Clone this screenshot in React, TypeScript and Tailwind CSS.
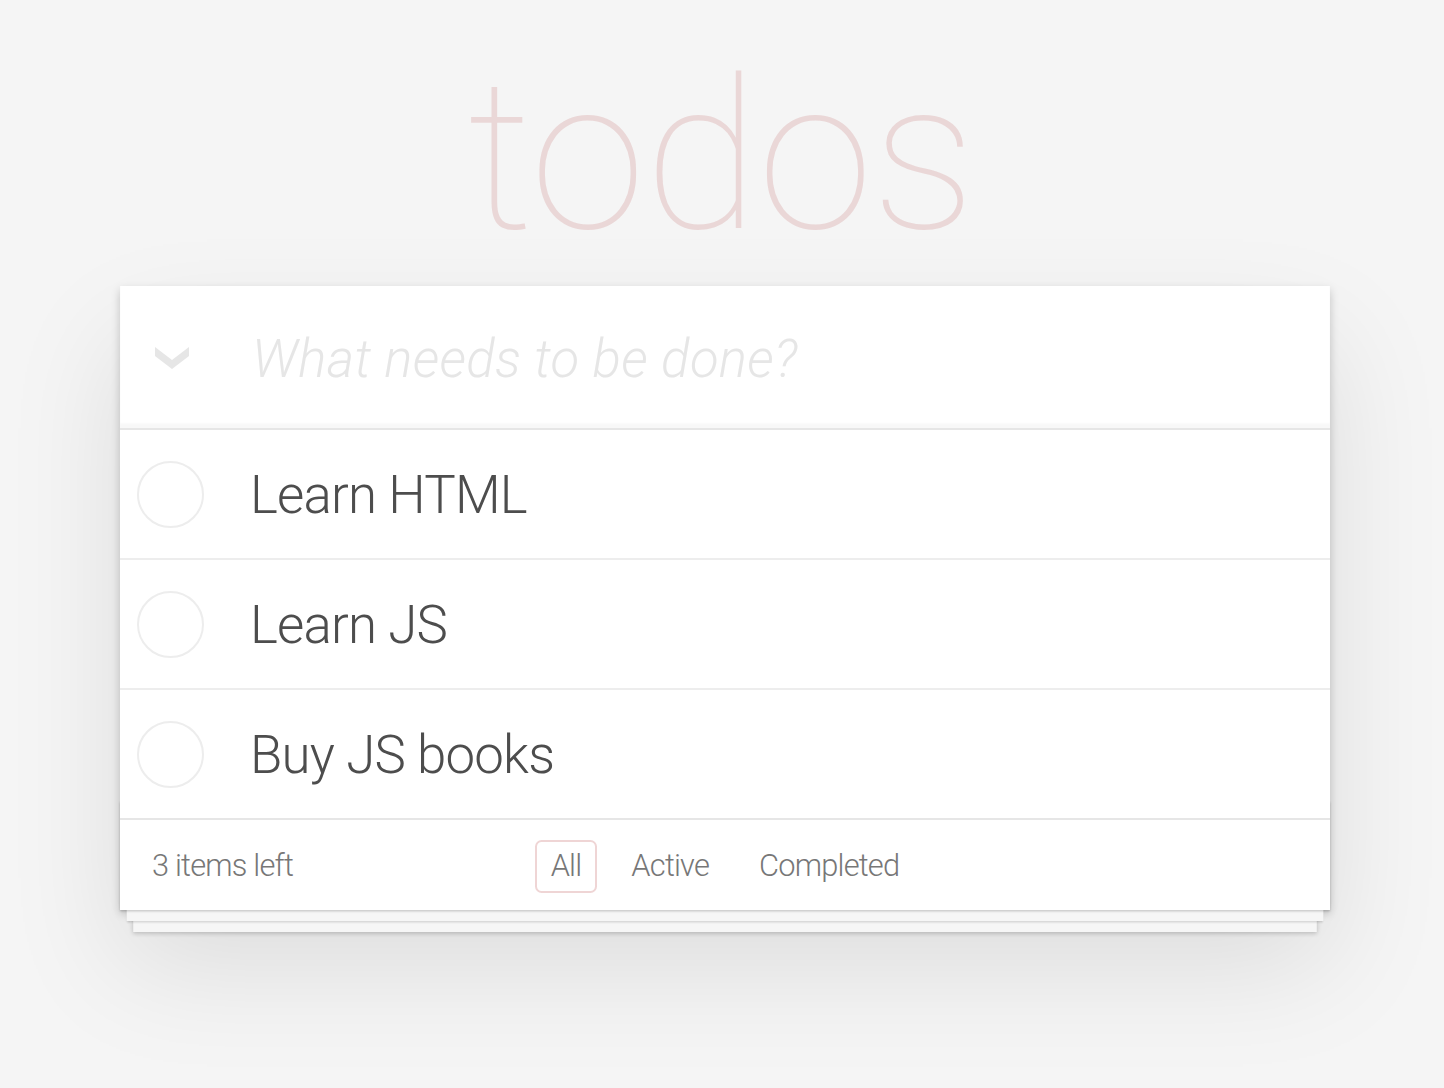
import React from "react";

const font = { fontFamily: "Roboto, 'Liberation Sans', Arial, sans-serif" };

const todos = ["Learn HTML", "Learn JS", "Buy JS books"];

export default function App() {
  return (
    <div
      className="min-h-[1088px] w-full bg-[#f5f5f5] text-[#4d4d4d] font-light"
      style={font}
    >
      <div className="ml-[120px] w-[1210px] pt-[52px]">
        <h1 className="h-[209px] pr-[8px] text-center text-[209px] leading-[209px] font-thin tracking-[-1px] text-[rgba(175,47,47,0.15)]">
          todos
        </h1>
        <div className="mt-[25px] relative bg-white shadow-[0_4.4px_8.8px_0_rgba(0,0,0,0.2),0_55px_110px_0_rgba(0,0,0,0.1)]">
          <header className="flex h-[142px] items-center shadow-[inset_0_-4.4px_2.2px_rgba(0,0,0,0.03)]">
            <div className="flex w-[132px] shrink-0 pl-[35px] pt-[2px]">
              <svg width="34" height="22" viewBox="0 0 34 22">
                <polygon points="0,0 17,13 34,0 34,9 17,22 0,9" fill="#e6e6e6" />
              </svg>
            </div>
            <div className="pt-[4px] text-[52.8px] italic font-light tracking-[0.3px] text-[#e6e6e6] leading-none">
              What needs to be done?
            </div>
          </header>
          <ul className="border-t-2 border-[#e6e6e6]">
            {todos.map((t, i) => (
              <li
                key={t}
                className={
                  i < todos.length - 1
                    ? "flex h-[130px] items-center border-b-2 border-[#ededed]"
                    : "flex h-[128px] items-center"
                }
              >
                <div className="flex w-[132px] shrink-0 pl-[17px]">
                  <div className="h-[67px] w-[67px] rounded-full border-2 border-[#ededed]" />
                </div>
                <span className="-ml-[2px] pt-[2px] text-[52.8px] leading-none font-light tracking-[-0.8px] text-[#4d4d4d]">
                  {t}
                </span>
              </li>
            ))}
          </ul>
          <footer className="relative grid h-[92px] grid-cols-[1fr_auto_1fr] items-center border-t-2 border-[#e6e6e6] px-[33px] text-[30.8px] font-light tracking-[-0.8px] text-[#777]">
            <div className="pointer-events-none absolute bottom-0 left-0 right-0 h-[110px] shadow-[0_2.2px_2.2px_rgba(0,0,0,0.2),0_17.6px_0_-6.6px_#f6f6f6,0_19.8px_2.2px_-6.6px_rgba(0,0,0,0.2),0_35.2px_0_-13.2px_#f6f6f6,0_37.4px_4.4px_-13.2px_rgba(0,0,0,0.2)]" />
            <span className="relative -ml-[1px] pt-[2px] leading-none">3 items left</span>
            <ul className="relative flex items-center gap-[18px] pt-[2px]">
              <li className="flex h-[53px] items-center rounded-[6.6px] border-2 border-[rgba(175,47,47,0.2)] px-[14px] leading-none">
                All
              </li>
              <li className="flex h-[53px] items-center rounded-[6.6px] border-2 border-transparent px-[14px] leading-none">
                Active
              </li>
              <li className="flex h-[53px] items-center rounded-[6.6px] border-2 border-transparent px-[14px] leading-none">
                Completed
              </li>
            </ul>
            <span />
          </footer>
        </div>
      </div>
    </div>
  );
}
